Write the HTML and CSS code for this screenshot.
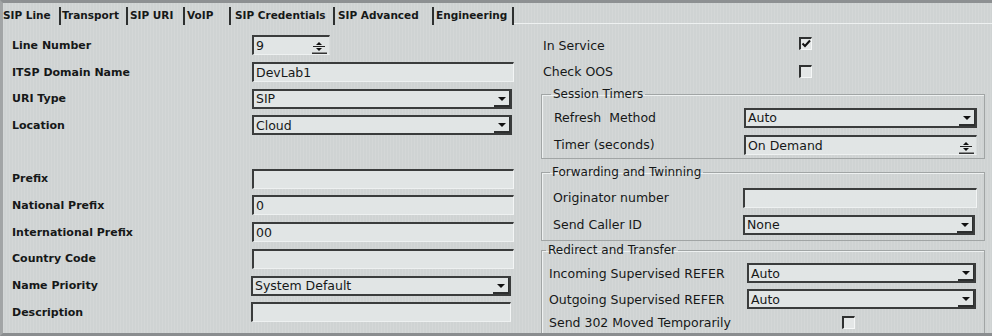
FILE: index.html
```html
<!DOCTYPE html>
<html>
<head>
<meta charset="utf-8">
<link rel="stylesheet" href="styles.css">
</head>
<body>
<div class="screen">
  <div class="tabs">
    <div class="tab t1">SIP Line</div>
    <div class="tab t2">Transport</div>
    <div class="tab t3">SIP URI</div>
    <div class="tab t4">VoIP</div>
    <div class="tab t5">SIP Credentials</div>
    <div class="tab t6">SIP Advanced</div>
    <div class="tab t7">Engineering</div>
    <div class="tabfill"></div>
  </div>
  <div class="panel">
    <div class="left">
      <div class="lbl">Line Number</div>
      <div class="ctl">
        <div class="box spin w78"><span class="val">9</span>
          <span class="spinbtn"><svg width="16" height="15" viewBox="0 0 16 15"><polygon points="5,6 11,6 8,3" fill="#111"/><rect x="2" y="7" width="12" height="1" fill="#222"/><polygon points="5,9 11,9 8,12" fill="#111"/><rect x="1" y="13.5" width="15" height="1.5" fill="#333"/></svg></span>
        </div>
      </div>
      <div class="lbl">ITSP Domain Name</div>
      <div class="ctl"><div class="box text w262"><span class="val">DevLab1</span></div></div>
      <div class="lbl">URI Type</div>
      <div class="ctl"><div class="box sel w260"><span class="val">SIP</span><span class="arrow"><svg width="14" height="14" viewBox="0 0 14 14"><polygon points="3,6 11,6 7,10" fill="#111"/></svg></span></div></div>
      <div class="lbl">Location</div>
      <div class="ctl"><div class="box sel w260"><span class="val">Cloud</span><span class="arrow"><svg width="14" height="14" viewBox="0 0 14 14"><polygon points="3,6 11,6 7,10" fill="#111"/></svg></span></div></div>
      <div class="lbl"></div>
      <div class="ctl"></div>
      <div class="lbl">Prefix</div>
      <div class="ctl"><div class="box text w262"></div></div>
      <div class="lbl">National Prefix</div>
      <div class="ctl"><div class="box text w262"><span class="val">0</span></div></div>
      <div class="lbl">International Prefix</div>
      <div class="ctl"><div class="box text w262"><span class="val">00</span></div></div>
      <div class="lbl">Country Code</div>
      <div class="ctl"><div class="box text w262"></div></div>
      <div class="lbl">Name Priority</div>
      <div class="ctl shift"><div class="box sel w260"><span class="val">System Default</span><span class="arrow"><svg width="14" height="14" viewBox="0 0 14 14"><polygon points="3,6 11,6 7,10" fill="#111"/></svg></span></div></div>
      <div class="lbl">Description</div>
      <div class="ctl shift"><div class="box text w260"></div></div>
    </div>

    <div class="right">
      <div class="rrow">
        <div class="rlbl top">In Service</div>
        <div class="chk up"><svg width="10" height="10" viewBox="0 0 10 10"><path d="M1.5 4.5 L4 7 L9 1.5" fill="none" stroke="#111" stroke-width="2"/></svg></div>
      </div>
      <div class="rrow">
        <div class="rlbl top">Check OOS</div>
        <div class="chk"></div>
      </div>

      <fieldset class="grp g1">
        <legend>Session Timers</legend>
        <div class="grow">
          <div class="rlbl c190">Refresh&nbsp; Method</div>
          <div class="box sel w234"><span class="val">Auto</span><span class="arrow"><svg width="14" height="14" viewBox="0 0 14 14"><polygon points="3,6 11,6 7,10" fill="#111"/></svg></span></div>
        </div>
        <div class="grow">
          <div class="rlbl c190">Timer (seconds)</div>
          <div class="box spin w234"><span class="val">On Demand</span>
            <span class="spinbtn"><svg width="16" height="15" viewBox="0 0 16 15"><polygon points="5,6 11,6 8,3" fill="#111"/><rect x="2" y="7" width="12" height="1" fill="#222"/><polygon points="5,9 11,9 8,12" fill="#111"/><rect x="1" y="13.5" width="15" height="1.5" fill="#333"/></svg></span>
          </div>
        </div>
      </fieldset>

      <fieldset class="grp g2">
        <legend>Forwarding and Twinning</legend>
        <div class="grow">
          <div class="rlbl c190">Originator number</div>
          <div class="box text w234"></div>
        </div>
        <div class="grow">
          <div class="rlbl c190">Send Caller ID</div>
          <div class="box sel w232"><span class="val">None</span><span class="arrow"><svg width="14" height="14" viewBox="0 0 14 14"><polygon points="3,6 11,6 7,10" fill="#111"/></svg></span></div>
        </div>
      </fieldset>

      <fieldset class="grp g3">
        <legend>Redirect and Transfer</legend>
        <div class="grow">
          <div class="rlbl c198">Incoming Supervised REFER</div>
          <div class="box sel w229"><span class="val">Auto</span><span class="arrow"><svg width="14" height="14" viewBox="0 0 14 14"><polygon points="3,6 11,6 7,10" fill="#111"/></svg></span></div>
        </div>
        <div class="grow">
          <div class="rlbl c198">Outgoing Supervised REFER</div>
          <div class="box sel w229"><span class="val">Auto</span><span class="arrow"><svg width="14" height="14" viewBox="0 0 14 14"><polygon points="3,6 11,6 7,10" fill="#111"/></svg></span></div>
        </div>
        <div class="grow short">
          <div class="rlbl c293">Send 302 Moved Temporarily</div>
          <div class="chk"></div>
        </div>
      </fieldset>
    </div>
  </div>
</div>
</body>
</html>
```

FILE: styles.css
```css
* { box-sizing: border-box; }
html, body { margin: 0; padding: 0; background: #cdd1d1; }

.screen {
  width: 992px;
  height: 336px;
  overflow: hidden;
  border-top: 3px solid #8d9092;
  border-left: 3px solid #a2a5a6;
  border-bottom: 3px solid #8a8d8f;
  background-color: #cfd3d3;
  background-image: repeating-linear-gradient(90deg, rgba(255,255,255,0.10) 0 1px, rgba(0,0,0,0) 1px 3px);
  font-family: "DejaVu Sans", Verdana, sans-serif;
  color: #161818;
}

/* tabs */
.tabs {
  display: flex;
  align-items: flex-end;
  height: 22px;
}
.tab {
  height: 18px;
  line-height: 16px;
  font-weight: bold;
  font-size: 10.5px;
  padding-left: 2px;
  border-right: 2px solid #2e3030;
  white-space: nowrap;
  overflow: hidden;
}
.t1 { width: 58px; padding-left: 0; }
.t2 { width: 67px; padding-left: 1px; }
.t3 { width: 57px; }
.t4 { width: 46px; }
.t5 { width: 104px; padding-left: 4px; }
.t6 { width: 99px; padding-left: 3px; }
.t7 { width: 80px; }
.tabfill {
  flex: 1;
  align-self: stretch;
  border-bottom: 1px solid #eef1f1;
  margin-bottom: 1px;
}

/* panel */
.panel {
  display: flex;
}
.left {
  display: grid;
  grid-template-columns: 240px 262px;
  grid-auto-rows: 26.7px;
  padding: 7px 0 0 9px;
  width: 511px;
}
.lbl {
  font-weight: bold;
  font-size: 11px;
  display: flex;
  align-items: center;
  white-space: nowrap;
}
.ctl {
  display: flex;
  align-items: center;
}
.ctl.shift { margin-left: -1px; }

.box {
  height: 20px;
  display: flex;
  align-items: center;
  background: #e1e5e5;
  border-top: 2px solid #3a3c3c;
  border-left: 2px solid #3a3c3c;
  border-right: 1px solid #f3f5f5;
  border-bottom: 1px solid #eef1f1;
  font-size: 12.5px;
}
.box .val { padding-left: 2px; flex: 1; white-space: nowrap; line-height: 17px; }
.box.sel {
  border-right: 2px solid #3a3c3c;
  border-bottom: 2px solid #3a3c3c;
}
.box.spin { border-right-color: #d8dcdc; }
.arrow {
  width: 16px;
  height: 16px;
  display: flex;
  align-items: center;
  justify-content: center;
  border-bottom: 2px solid #2d2f2f;
  border-right: 1px solid #2d2f2f;
  align-self: flex-end;
}
.spinbtn {
  width: 18px;
  height: 17px;
  display: flex;
  align-items: flex-end;
  justify-content: center;
  margin-right: 1px;
}
.w78 { width: 78px; }
.w262 { width: 262px; }
.w260 { width: 260px; }
.w234 { width: 234px; }
.w232 { width: 232px; }
.w229 { width: 229px; }

/* right column */
.right {
  width: 444px;
  margin-left: 27px;
  padding-top: 7px;
  display: flex;
  flex-direction: column;
}
.rrow {
  height: 26px;
  display: flex;
  align-items: center;
}
.rlbl {
  font-size: 12.5px;
  white-space: nowrap;
  flex: none;
}
.rlbl.top { width: 258px; padding-left: 2px; }
.c190 { width: 190px; }
.c198 { width: 198px; }
.c293 { width: 293px; }

.chk {
  width: 13px;
  height: 13px;
  background: #e4e7e7;
  border-top: 2px solid #2f3131;
  border-left: 2px solid #2f3131;
  border-right: 1px solid #f5f7f7;
  border-bottom: 1px solid #f5f7f7;
  display: flex;
  align-items: center;
  justify-content: center;
}
.chk.up { margin-top: -3px; }

fieldset.grp {
  margin: 0;
  border: 1px solid #a1a5a5;
  box-shadow: inset 1px 1px 0 #eef1f1;
  padding: 3px 7px 0 12px;
  min-width: 0;
}
fieldset.grp legend {
  font-size: 12px;
  line-height: 14px;
  padding: 0 2px;
  margin-left: -3px;
}
.g1 { margin-top: 3px !important; padding-bottom: 0 !important; }
.g2 { margin-top: 6px !important; padding-top: 5px !important; padding-bottom: 2px !important; padding-left: 11px !important; }
.g3 { margin-top: 2px !important; padding-left: 7px !important; padding-bottom: 10px !important; }
.g3 legend { margin-left: 0; }
.grow {
  height: 27px;
  display: flex;
  align-items: center;
}
.g3 .grow { height: 26px; }
.g3 .grow.short { height: 20px; }
```
